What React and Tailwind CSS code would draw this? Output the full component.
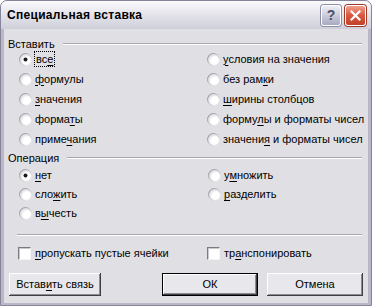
import React from 'react';

const Acc = ({ children }) => <span className="underline underline-offset-[2px] decoration-[1px]">{children}</span>;

const Radio = ({ checked }) => (
  <svg width="13" height="13" viewBox="0 0 13 13" className="shrink-0">
    <defs>
      <linearGradient id="rb" x1="0" y1="0" x2="1" y2="1">
        <stop offset="0" stopColor="#85848f" />
        <stop offset="1" stopColor="#ffffff" />
      </linearGradient>
      <radialGradient id="rf" cx="0.62" cy="0.62" r="0.7">
        <stop offset="0.45" stopColor="#ffffff" />
        <stop offset="1" stopColor="#cac9d2" />
      </radialGradient>
    </defs>
    <circle cx="6.5" cy="6.5" r="6" fill="url(#rf)" stroke="url(#rb)" strokeWidth="1" />
    {checked && <circle cx="6.5" cy="6.5" r="2" fill="#1a1a1a" />}
  </svg>
);

const Check = () => (
  <div className="w-[13px] h-[13px] shrink-0 bg-white border border-t-[#7a7a80] border-l-[#7a7a80] border-r-[#f4f4f4] border-b-[#f4f4f4] shadow-[inset_1px_1px_#c9c8d0]" />
);

const Opt = ({ checked, children, h = 'h-[20px]' }) => (
  <div className={`flex items-center ${h}`}>
    <Radio checked={checked} />
    <span className="ml-[3px]">{children}</span>
  </div>
);

const Header = ({ children }) => (
  <div className="flex items-center h-[14px] pl-[4px] pr-[6px]">
    <span>{children}</span>
    <div className="flex-1 ml-[8px] border-t border-t-[#a8a7b0] border-b border-b-white" />
  </div>
);

const btn = 'h-[23px] bg-[#e8e7eb] text-[11px] text-black flex items-center justify-center shadow-[inset_-1px_-1px_#404040,inset_1px_1px_#ffffff,inset_-2px_-2px_#8c8b94]';

export default function App() {
  return (
    <div className="w-[372px] h-[306px] bg-white" style={{ fontFamily: '"Liberation Sans", Arial, sans-serif' }}>
      <div className="w-full h-full flex flex-col rounded-t-[7px] bg-[#b9b8c9] border border-[#85849a]">
        {/* title bar */}
        <div className="h-[28px] flex items-center pl-[6px] pr-[5px] rounded-t-[6px] bg-gradient-to-b from-[#fbfbfd] via-[#e3e3ea] to-[#cfcfda]">
          <span className="text-[12px] font-bold text-black tracking-[0.3px]">Специальная вставка</span>
          <div className="ml-auto flex items-center gap-[4px]">
            <div className="w-[20px] h-[21px] rounded-[3px] border border-white bg-gradient-to-b from-[#eeeef4] to-[#a9aac2] flex items-center justify-center shadow-[0_0_0_1px_#8e8ea6]">
              <span className="text-[14px] font-bold text-[#4c4c62] leading-none">?</span>
            </div>
            <div className="w-[21px] h-[21px] rounded-[3px] border border-white bg-gradient-to-b from-[#f0a08c] via-[#d9573d] to-[#c2412a] flex items-center justify-center shadow-[0_0_0_1px_#9c3a2a]">
              <svg width="11" height="11" viewBox="0 0 11 11">
                <path d="M1.5 1.5 L9.5 9.5 M9.5 1.5 L1.5 9.5" stroke="#fff" strokeWidth="2.2" strokeLinecap="square" />
              </svg>
            </div>
          </div>
        </div>

        {/* body */}
        <div className="flex-1 mx-[3px] mb-[2px] bg-[#e0dfe3] text-[11px] text-black flex flex-col pt-[8px]">
          <Header>Вставить</Header>
          <div className="grid grid-cols-[188px_1fr] -mt-[2px] pl-[15px]">
            <div className="flex flex-col">
              <Opt checked>
                <span className="-ml-[1px] px-[1px] py-[1px] border border-dotted border-black"><span>вс</span><Acc>е</Acc></span>
              </Opt>
              <Opt><Acc>ф</Acc>ормулы</Opt>
              <Opt><Acc>з</Acc>начения</Opt>
              <Opt>форма<Acc>т</Acc>ы</Opt>
              <Opt>приме<Acc>ч</Acc>ания</Opt>
            </div>
            <div className="flex flex-col">
              <Opt><Acc>у</Acc>словия на значения</Opt>
              <Opt>без рам<Acc>к</Acc>и</Opt>
              <Opt><Acc>ш</Acc>ирины столбцов</Opt>
              <Opt>форму<Acc>л</Acc>ы и форматы чисел</Opt>
              <Opt>значени<Acc>я</Acc> и форматы чисел</Opt>
            </div>
          </div>

          <div className="mt-[2px]">
            <Header>Операция</Header>
          </div>
          <div className="grid grid-cols-[189px_1fr] pl-[15px] mt-[1px]">
            <div className="flex flex-col">
              <Opt checked h="h-[19px]"><Acc>н</Acc>ет</Opt>
              <Opt h="h-[19px]">сло<Acc>ж</Acc>ить</Opt>
              <Opt h="h-[19px]">в<Acc>ы</Acc>честь</Opt>
            </div>
            <div className="flex flex-col">
              <Opt h="h-[19px]">у<Acc>м</Acc>ножить</Opt>
              <Opt h="h-[19px]"><Acc>р</Acc>азделить</Opt>
            </div>
          </div>

          <div className="mt-[11px] ml-[13px] mr-[6px] border-t border-t-[#a8a7b0] border-b border-b-white" />

          <div className="grid grid-cols-[189px_1fr] pl-[14px] mt-[11px]">
            <div className="flex items-center h-[13px]">
              <Check />
              <span className="ml-[4px]"><Acc>п</Acc>ропускать пустые ячейки</span>
            </div>
            <div className="flex items-center h-[13px]">
              <Check />
              <span className="ml-[4px]">тр<Acc>а</Acc>нспонировать</span>
            </div>
          </div>

          <div className="flex mt-[13px] pl-[5px]">
            <button className={`${btn} w-[92px]`}>Встав<Acc>и</Acc>ть связь</button>
            <button className={`${btn} w-[96px] ml-[61px] border border-black`}>ОК</button>
            <button className={`${btn} w-[96px] ml-[9px]`}>Отмена</button>
          </div>
        </div>
      </div>
    </div>
  );
}
